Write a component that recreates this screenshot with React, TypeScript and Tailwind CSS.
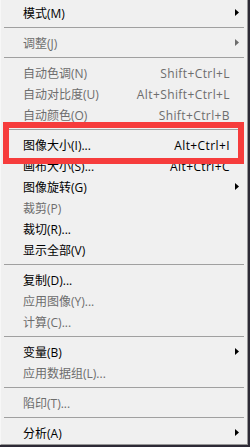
import React from "react";

type Item =
  | { sep: true }
  | { label: string; shortcut?: string; disabled?: boolean; submenu?: boolean };

const items: Item[] = [
  { label: "模式(M)", submenu: true },
  { sep: true },
  { label: "调整(J)", submenu: true, disabled: true },
  { sep: true },
  { label: "自动色调(N)", shortcut: "Shift+Ctrl+L", disabled: true },
  { label: "自动对比度(U)", shortcut: "Alt+Shift+Ctrl+L", disabled: true },
  { label: "自动颜色(O)", shortcut: "Shift+Ctrl+B", disabled: true },
  { sep: true },
  { label: "图像大小(I)...", shortcut: "Alt+Ctrl+I" },
  { label: "画布大小(S)...", shortcut: "Alt+Ctrl+C" },
  { label: "图像旋转(G)", submenu: true },
  { label: "裁剪(P)", disabled: true },
  { label: "裁切(R)..." },
  { label: "显示全部(V)" },
  { sep: true },
  { label: "复制(D)..." },
  { label: "应用图像(Y)...", disabled: true },
  { label: "计算(C)...", disabled: true },
  { sep: true },
  { label: "变量(B)", submenu: true },
  { label: "应用数据组(L)...", disabled: true },
  { sep: true },
  { label: "陷印(T)...", disabled: true },
  { sep: true },
  { label: "分析(A)", submenu: true },
];

function Arrow({ disabled }: { disabled?: boolean }) {
  return (
    <svg width="4" height="7" viewBox="0 0 4 7" className="-mt-[2px]">
      <polygon points="0,0 4,3.5 0,7" fill={disabled ? "#6d6d6d" : "#000"} />
    </svg>
  );
}

export default function App() {
  return (
    <div className="h-[447px] w-[250px] bg-[#2d2a36]">
      <div
        className="relative flex h-[445px] w-[248px] flex-col border-r border-b border-l border-[#979797] border-l-[#f7f7f7] bg-[#f0f0f0] pt-[3px] text-[12px] leading-none"
        style={{ fontFamily: '"Open Sans", "Noto Sans CJK SC", sans-serif' }}
      >
        {items.map((it, i) =>
          "sep" in it ? (
            <div key={i} className="h-[9px] px-[3px] pt-[3px]">
              <div className="border-t border-[#a0a0a0]" />
            </div>
          ) : (
            <div
              key={i}
              className={`flex h-[21px] items-center pl-[22px] ${
                it.disabled ? "text-[#6d6d6d]" : "text-black"
              }`}
            >
              <span className="flex-1">{it.label}</span>
              {it.shortcut && (
                <span className="tracking-[0.4px]">{it.shortcut}</span>
              )}
              <span className="flex w-[17px] items-center pl-[5px]">
                {it.submenu && <Arrow disabled={it.disabled} />}
              </span>
            </div>
          )
        )}

        {/* red annotation box */}
        <div className="absolute top-[122px] left-[2px] h-[42px] w-[241px] border-[6px] border-[#f63c3c]" />
      </div>
    </div>
  );
}
